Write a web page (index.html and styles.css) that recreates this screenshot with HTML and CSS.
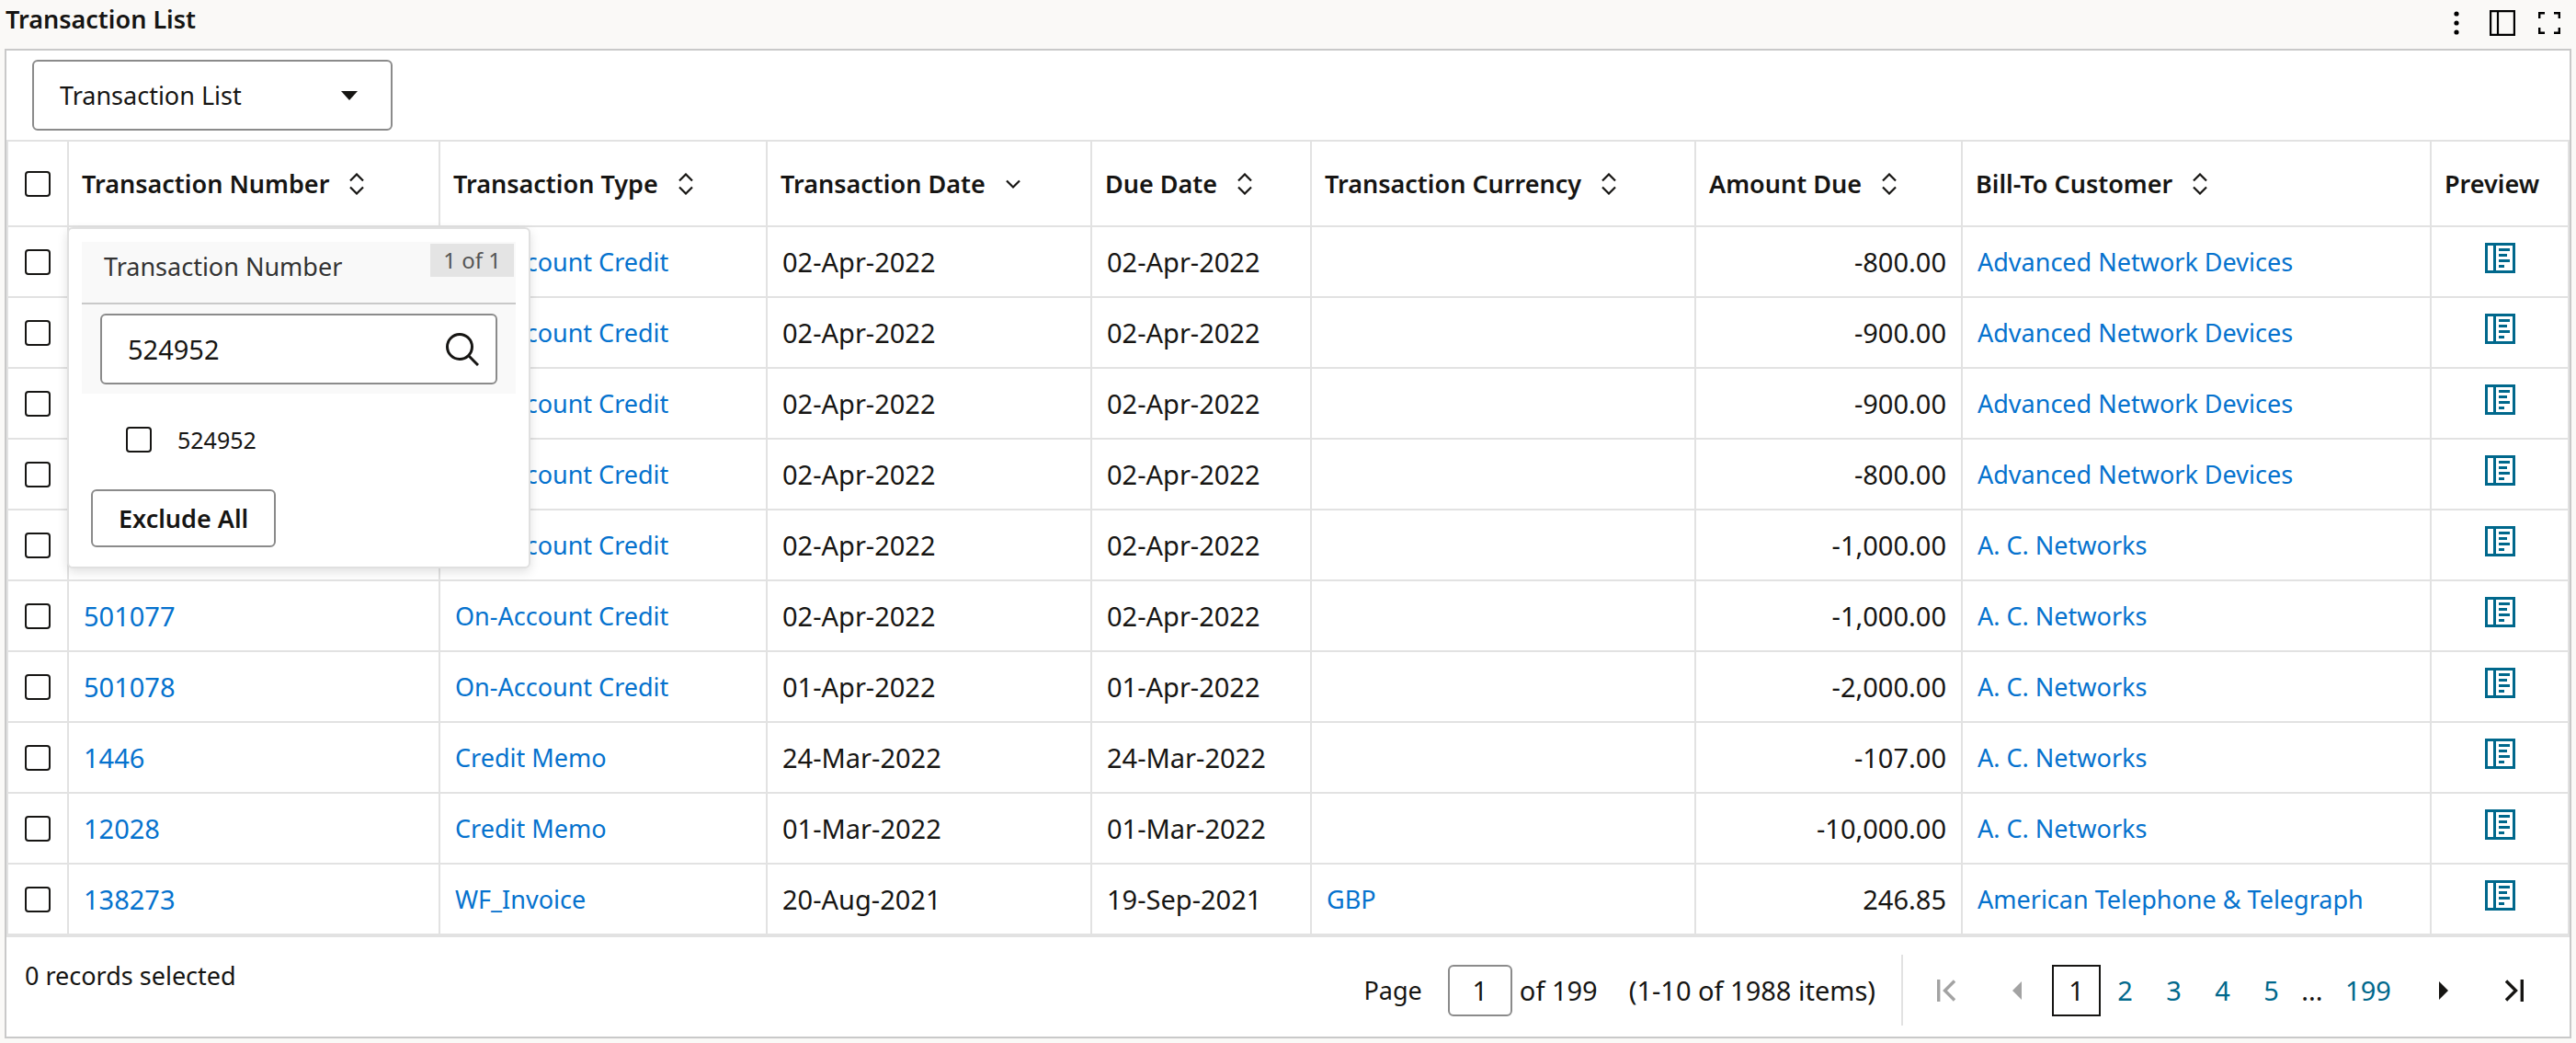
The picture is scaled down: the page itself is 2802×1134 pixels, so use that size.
FILE: index.html
```html
<!DOCTYPE html>
<html lang="en">
<head>
<meta charset="utf-8">
<title>Transaction List</title>
<link rel="stylesheet" href="styles.css">
</head>
<body>
<svg class="sprite" aria-hidden="true">
  <symbol id="sort" viewBox="0 0 16 24"><path d="M1 8.500 8 1.500l7 7M1 15.500l7 7 7-7" fill="none" stroke="currentColor" stroke-width="2.200"/></symbol>
  <symbol id="sort-down" viewBox="0 0 16 24"><path d="M1 8.500l7 7 7-7" fill="none" stroke="currentColor" stroke-width="2.200"/></symbol>
  <symbol id="preview" viewBox="0 0 33 33"><path d="M1.500 1.500h30v30h-30zM10.500 1.500v30" fill="none" stroke="currentColor" stroke-width="3"/><path d="M15 7.500h12M15 13.500h9M15 19.500h12M15 25.500h6" fill="none" stroke="currentColor" stroke-width="3"/></symbol>
</svg>

<header class="titlebar">
  <h1 class="title">Transaction List</h1>
  <div class="tools">
    <button class="icon-btn" aria-label="More actions"><svg width="6" height="28" viewBox="0 0 6 28"><circle cx="3" cy="4" r="2.600"/><circle cx="3" cy="14" r="2.600"/><circle cx="3" cy="24" r="2.600"/></svg></button>
    <button class="icon-btn" aria-label="Toggle panel"><svg class="line" width="28" height="28" viewBox="0 0 28 28" stroke-width="2.200"><path d="M1.100 1.100h25.800v25.800H1.100zM9 1v26"/></svg></button>
    <button class="icon-btn" aria-label="Full screen"><svg class="line" width="24" height="24" viewBox="0 0 24 24" stroke-width="2.400"><path d="M1.200 7V1.200H7M17 1.200h5.800V7M22.800 17v5.800H17M7 22.800H1.200V17"/></svg></button>
  </div>
</header>

<main class="panel">
  <div class="toolbar">
    <div class="picker">
      <select class="picker-select" aria-label="View"><option>Transaction List</option></select>
      <svg class="picker-arrow" width="18" height="10" viewBox="0 0 18 10" aria-hidden="true"><path d="M0 0h18L9 10z"/></svg>
    </div>
  </div>

  <table class="grid">
    <colgroup>
      <col class="col-check"><col class="col-number"><col class="col-type"><col class="col-date"><col class="col-due"><col class="col-currency"><col class="col-amount"><col><col class="col-preview">
    </colgroup>
    <thead>
      <tr>
        <th class="check-cell"><input type="checkbox" class="check" aria-label="Select all"></th>
        <th class="anchor">
          <div class="head"><span>Transaction Number</span><button class="icon-btn" aria-label="Sort"><svg width="16" height="24"><use href="#sort"/></svg></button></div>
          <section class="filter">
            <div class="filter-top">
              <div class="filter-head">
                <label class="filter-title" for="filter-query">Transaction Number</label>
                <span class="count">1 of 1</span>
              </div>
              <div class="search">
                <input type="text" id="filter-query" class="search-input" value="524952">
                <button class="icon-btn" aria-label="Search"><svg class="line" width="36" height="36" viewBox="0 0 36 36" stroke-width="3"><circle cx="15" cy="15" r="13.500"/><path d="M24.500 24.500 35 35"/></svg></button>
              </div>
            </div>
            <label class="choice"><input type="checkbox" class="check"><span>524952</span></label>
            <button class="exclude">Exclude All</button>
          </section>
        </th>
        <th><div class="head"><span>Transaction Type</span><button class="icon-btn" aria-label="Sort"><svg width="16" height="24"><use href="#sort"/></svg></button></div></th>
        <th><div class="head"><span>Transaction Date</span><button class="icon-btn" aria-label="Sort"><svg width="16" height="24"><use href="#sort-down"/></svg></button></div></th>
        <th><div class="head"><span>Due Date</span><button class="icon-btn" aria-label="Sort"><svg width="16" height="24"><use href="#sort"/></svg></button></div></th>
        <th><div class="head"><span>Transaction Currency</span><button class="icon-btn" aria-label="Sort"><svg width="16" height="24"><use href="#sort"/></svg></button></div></th>
        <th><div class="head"><span>Amount Due</span><button class="icon-btn" aria-label="Sort"><svg width="16" height="24"><use href="#sort"/></svg></button></div></th>
        <th><div class="head"><span>Bill-To Customer</span><button class="icon-btn" aria-label="Sort"><svg width="16" height="24"><use href="#sort"/></svg></button></div></th>
        <th>Preview</th>
      </tr>
    </thead>
    <tbody>
      <tr><td class="check-cell"><input type="checkbox" class="check" aria-label="Select row"></td><td></td><td><a href="#">On-Account Credit</a></td><td class="figure">02-Apr-2022</td><td class="figure">02-Apr-2022</td><td></td><td class="figure amount">-800.00</td><td><a href="#">Advanced Network Devices</a></td><td class="preview-cell"><button class="icon-btn" aria-label="Preview"><svg width="33" height="33"><use href="#preview"/></svg></button></td></tr>
      <tr><td class="check-cell"><input type="checkbox" class="check" aria-label="Select row"></td><td></td><td><a href="#">On-Account Credit</a></td><td class="figure">02-Apr-2022</td><td class="figure">02-Apr-2022</td><td></td><td class="figure amount">-900.00</td><td><a href="#">Advanced Network Devices</a></td><td class="preview-cell"><button class="icon-btn" aria-label="Preview"><svg width="33" height="33"><use href="#preview"/></svg></button></td></tr>
      <tr><td class="check-cell"><input type="checkbox" class="check" aria-label="Select row"></td><td></td><td><a href="#">On-Account Credit</a></td><td class="figure">02-Apr-2022</td><td class="figure">02-Apr-2022</td><td></td><td class="figure amount">-900.00</td><td><a href="#">Advanced Network Devices</a></td><td class="preview-cell"><button class="icon-btn" aria-label="Preview"><svg width="33" height="33"><use href="#preview"/></svg></button></td></tr>
      <tr><td class="check-cell"><input type="checkbox" class="check" aria-label="Select row"></td><td></td><td><a href="#">On-Account Credit</a></td><td class="figure">02-Apr-2022</td><td class="figure">02-Apr-2022</td><td></td><td class="figure amount">-800.00</td><td><a href="#">Advanced Network Devices</a></td><td class="preview-cell"><button class="icon-btn" aria-label="Preview"><svg width="33" height="33"><use href="#preview"/></svg></button></td></tr>
      <tr><td class="check-cell"><input type="checkbox" class="check" aria-label="Select row"></td><td></td><td><a href="#">On-Account Credit</a></td><td class="figure">02-Apr-2022</td><td class="figure">02-Apr-2022</td><td></td><td class="figure amount">-1,000.00</td><td><a href="#">A. C. Networks</a></td><td class="preview-cell"><button class="icon-btn" aria-label="Preview"><svg width="33" height="33"><use href="#preview"/></svg></button></td></tr>
      <tr><td class="check-cell"><input type="checkbox" class="check" aria-label="Select row"></td><td class="figure"><a href="#">501077</a></td><td><a href="#">On-Account Credit</a></td><td class="figure">02-Apr-2022</td><td class="figure">02-Apr-2022</td><td></td><td class="figure amount">-1,000.00</td><td><a href="#">A. C. Networks</a></td><td class="preview-cell"><button class="icon-btn" aria-label="Preview"><svg width="33" height="33"><use href="#preview"/></svg></button></td></tr>
      <tr><td class="check-cell"><input type="checkbox" class="check" aria-label="Select row"></td><td class="figure"><a href="#">501078</a></td><td><a href="#">On-Account Credit</a></td><td class="figure">01-Apr-2022</td><td class="figure">01-Apr-2022</td><td></td><td class="figure amount">-2,000.00</td><td><a href="#">A. C. Networks</a></td><td class="preview-cell"><button class="icon-btn" aria-label="Preview"><svg width="33" height="33"><use href="#preview"/></svg></button></td></tr>
      <tr><td class="check-cell"><input type="checkbox" class="check" aria-label="Select row"></td><td class="figure"><a href="#">1446</a></td><td><a href="#">Credit Memo</a></td><td class="figure">24-Mar-2022</td><td class="figure">24-Mar-2022</td><td></td><td class="figure amount">-107.00</td><td><a href="#">A. C. Networks</a></td><td class="preview-cell"><button class="icon-btn" aria-label="Preview"><svg width="33" height="33"><use href="#preview"/></svg></button></td></tr>
      <tr><td class="check-cell"><input type="checkbox" class="check" aria-label="Select row"></td><td class="figure"><a href="#">12028</a></td><td><a href="#">Credit Memo</a></td><td class="figure">01-Mar-2022</td><td class="figure">01-Mar-2022</td><td></td><td class="figure amount">-10,000.00</td><td><a href="#">A. C. Networks</a></td><td class="preview-cell"><button class="icon-btn" aria-label="Preview"><svg width="33" height="33"><use href="#preview"/></svg></button></td></tr>
      <tr><td class="check-cell"><input type="checkbox" class="check" aria-label="Select row"></td><td class="figure"><a href="#">138273</a></td><td><a href="#">WF_Invoice</a></td><td class="figure">20-Aug-2021</td><td class="figure">19-Sep-2021</td><td><a href="#">GBP</a></td><td class="figure amount">246.85</td><td><a href="#">American Telephone &amp; Telegraph</a></td><td class="preview-cell"><button class="icon-btn" aria-label="Preview"><svg width="33" height="33"><use href="#preview"/></svg></button></td></tr>
    </tbody>
  </table>

  <footer class="footer">
    <p class="selected">0 records selected</p>
    <div class="pager">
      <label for="page" class="page-label">Page</label>
      <input type="text" id="page" class="page-input" value="1">
      <span class="page-total">of 199</span>
      <span>(1-10 of 1988 items)</span>
      <nav class="pages" aria-label="Pages">
        <button class="step" aria-label="First page" disabled><svg class="line" width="20" height="24" viewBox="0 0 20 24" stroke-width="3.400"><path d="M1.700 0v24M19 1.500 8.500 12 19 22.500"/></svg></button>
        <button class="step" aria-label="Previous page" disabled><svg width="10" height="20" viewBox="0 0 10 20"><path d="M10 0v20L0 10z"/></svg></button>
        <a class="page current" href="#" aria-current="page">1</a>
        <a class="page" href="#">2</a>
        <a class="page" href="#">3</a>
        <a class="page" href="#">4</a>
        <a class="page" href="#">5</a>
        <span class="dots">...</span>
        <a class="page last" href="#">199</a>
        <button class="step" aria-label="Next page"><svg width="10" height="20" viewBox="0 0 10 20"><path d="M0 0v20l10-10z"/></svg></button>
        <button class="step" aria-label="Last page"><svg class="line" width="20" height="24" viewBox="0 0 20 24" stroke-width="3.400"><path d="M18.300 0v24M1 1.500 11.500 12 1 22.500"/></svg></button>
      </nav>
    </div>
  </footer>
</main>
</body>
</html>
```
FILE: styles.css
```css
* { box-sizing: border-box; }

body {
  margin: 0;
  padding: 0 5px 5px;
  background: #faf9f7;
  color: #161513;
  font-family: "Noto Sans", "Open Sans", sans-serif;
  font-size: 27px;
  line-height: 36px;
}

svg { display: block; fill: currentColor; }
.line { fill: none; stroke: currentColor; }
a { color: #0572ce; text-decoration: none; }
button, input, select { font: inherit; color: inherit; }

.sprite { display: none; }

.icon-btn {
  display: block;
  padding: 0;
  border: 0;
  background: none;
}

/* Title bar */
.titlebar {
  display: flex;
  justify-content: space-between;
  height: 53px;
  padding: 3px 12px 0 1px;
}

.title {
  margin: 0;
  font-size: 27px;
  font-weight: 600;
}

.tools {
  display: flex;
  align-items: center;
  gap: 25px;
  height: 44px;
  color: #000;
}

.tools .icon-btn:first-child { margin-right: 8px; }

/* Panel */
.panel {
  border: 2px solid #c9c9c9;
  background: #fff;
}

.toolbar {
  padding: 10px 28px;
}

.picker {
  display: grid;
  align-items: center;
  width: 392px;
}

.picker-select {
  grid-area: 1 / 1;
  width: 100%;
  height: 77px;
  padding: 0 28px;
  border: 2px solid #8b8b8b;
  border-radius: 6px;
  background: #fff;
  appearance: none;
}

.picker-arrow {
  grid-area: 1 / 1;
  justify-self: end;
  margin-right: 38px;
  pointer-events: none;
}

.check {
  display: block;
  width: 28px;
  height: 28px;
  margin: 0;
  border: 2px solid #161513;
  border-radius: 4px;
  background: #fff;
  appearance: none;
}

.check:checked { background: #161513; }

/* Grid */
.grid {
  width: 100%;
  table-layout: fixed;
  border: solid #e2e2e2;
  border-width: 2px 0 2px 2px;
  border-collapse: separate;
  border-spacing: 0;
}

.col-check { width: 66px; }
.col-number { width: 404px; }
.col-type { width: 356px; }
.col-date { width: 353px; }
.col-due { width: 239px; }
.col-currency { width: 418px; }
.col-amount { width: 290px; }
.col-preview { width: 150px; }

.grid th,
.grid td {
  border: solid #e2e2e2;
  border-width: 0 2px 2px 0;
  text-align: left;
  white-space: nowrap;
}

.grid th {
  height: 93px;
  padding: 0 14px;
  font-weight: 600;
}

.grid td {
  height: 77px;
  padding: 0 16px;
}

.grid .check-cell { padding: 0 18px; }
.grid .figure { font-size: 29px; }
.grid .amount { text-align: right; }
.grid .preview-cell { padding: 0 58px 8px; color: #00688c; }

.head {
  display: flex;
  align-items: center;
  gap: 22px;
}

/* Column filter */
.anchor { position: relative; }

.filter {
  position: absolute;
  z-index: 1;
  top: calc(100% + 2px);
  left: -2px;
  width: 504px;
  padding: 14px 14px 21px;
  border: 2px solid #e0e0e0;
  border-radius: 6px;
  background: #fff;
  box-shadow: 0 4px 12px rgba(0, 0, 0, .12);
  font-weight: 400;
}

.filter-top {
  padding-bottom: 10px;
  background: #f9f9f9;
}

.filter-head {
  display: flex;
  align-items: flex-start;
  justify-content: space-between;
  height: 68px;
  padding: 2px 2px 0 24px;
  border-bottom: 2px solid #c9c9c9;
}

.filter-title {
  padding-top: 7px;
  color: #333;
}

.count {
  padding: 0 14px;
  background: #e4e4e4;
  color: #555;
  font-size: 24px;
}

.search {
  display: flex;
  align-items: center;
  height: 77px;
  margin: 10px 20px 0;
  padding: 0 18px 0 28px;
  border: 2px solid #8b8b8b;
  border-radius: 6px;
  background: #fff;
}

.search-input {
  flex: 1;
  min-width: 0;
  padding: 0;
  border: 0;
  outline: 0;
  background: none;
  font-size: 29px;
}

.choice {
  display: flex;
  align-items: center;
  gap: 28px;
  margin: 32px 48px 36px;
  font-size: 25px;
}

.exclude {
  height: 63px;
  margin-left: 10px;
  padding: 0 28px;
  border: 2px solid #8b8b8b;
  border-radius: 6px;
  background: #fff;
  font-weight: 600;
}

/* Footer */
.footer {
  display: flex;
  justify-content: space-between;
  padding: 19px 22px 12px 20px;
}

.selected {
  margin: 0;
  padding-top: 5px;
}

.pager {
  display: flex;
  align-items: center;
  font-size: 29px;
}

.page-label { font-size: 27px; }

.page-input {
  width: 70px;
  height: 56px;
  margin: 0 8px 0 28px;
  padding: 0;
  border: 2px solid #8b8b8b;
  border-radius: 6px;
  background: #fff;
  text-align: center;
}

.page-total { margin-right: 34px; }

.pages {
  display: flex;
  align-items: center;
  height: 77px;
  margin-left: 28px;
  padding-left: 8px;
  border-left: 2px solid #e2e2e2;
}

.step {
  display: flex;
  justify-content: center;
  width: 77px;
  padding: 0;
  border: 0;
  background: none;
}

.step:disabled { color: #a3a3a3; }

.page {
  width: 53px;
  color: #00688c;
  text-align: center;
}

.current {
  border: 2px solid #161513;
  color: #161513;
  line-height: 52px;
}

.dots {
  width: 36px;
  text-align: center;
}

.last { width: 86px; }
```
